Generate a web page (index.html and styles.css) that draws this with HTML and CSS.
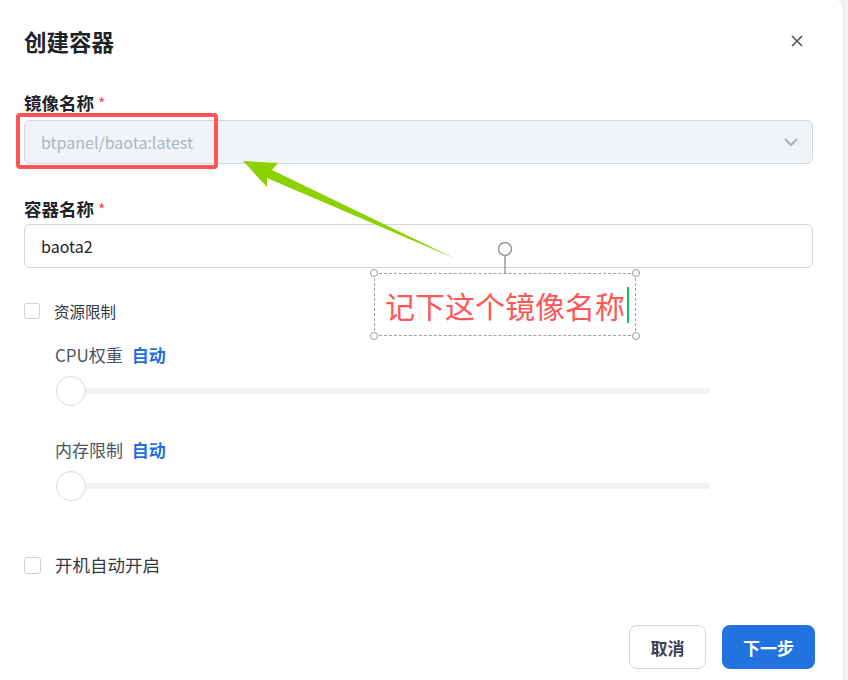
FILE: index.html
```html
<!DOCTYPE html>
<html lang="zh-CN">
<head>
    <meta charset="UTF-8">
    <title>创建容器</title>
    <link rel="stylesheet" href="styles.css">
</head>
<body>

    <div class="dialog">
        <!-- Header -->
        <div class="header">
            <h1>创建容器</h1>
            <button class="closebtn" aria-label="关闭">
                <svg width="12" height="12" viewBox="0 0 12 12"><path d="M1 1L11 11M11 1L1 11" stroke="#4b5563" stroke-width="1.6" fill="none"/></svg>
            </button>
        </div>

        <!-- Image name -->
        <label class="fieldlabel first">镜像名称 <span class="req">*</span></label>
        <div class="selectbox">
            <span class="placeholder">btpanel/baota:latest</span>
            <svg width="14" height="8" viewBox="0 0 14 8"><path d="M1 1L7 7L13 1" stroke="#a3b0c2" stroke-width="2" fill="none"/></svg>
        </div>

        <!-- Container name -->
        <label class="fieldlabel">容器名称 <span class="req">*</span></label>
        <div class="inputbox">baota2</div>

        <!-- Resource limits -->
        <div class="checkrow small">
            <span class="checkbox"></span>
            <span>资源限制</span>
        </div>

        <div class="limits">
            <div class="limitlabel">CPU权重 <span class="auto">自动</span></div>
            <div class="slider">
                <div class="track"></div>
                <div class="handle"></div>
            </div>

            <div class="limitlabel mem">内存限制 <span class="auto">自动</span></div>
            <div class="slider">
                <div class="track"></div>
                <div class="handle"></div>
            </div>
        </div>

        <div class="checkrow big">
            <span class="checkbox"></span>
            <span>开机自动开启</span>
        </div>

        <!-- Footer -->
        <div class="footer">
            <button class="btn cancel">取消</button>
            <button class="btn next">下一步</button>
        </div>

        <!-- Screenshot annotations -->
        <svg class="marks" width="848" height="680" viewBox="0 0 848 680">
            <rect x="18" y="115" width="198" height="52" rx="2" fill="none" stroke="#ff5454" stroke-width="4"/>
            <polygon points="243,161 278,163 272,170 456,259 267,178 267,187" fill="#8cd200"/>
            <line x1="505" y1="256" x2="505" y2="273" stroke="#9a9a9a" stroke-width="1.5"/>
            <circle cx="505" cy="249" r="6.5" fill="#fff" stroke="#9a9a9a" stroke-width="1.5"/>
        </svg>

        <div class="note">
            <span class="notetext">记下这个镜像名称</span><span class="caret"></span>
            <span class="dot tl"></span>
            <span class="dot tr"></span>
            <span class="dot bl"></span>
            <span class="dot br"></span>
        </div>
    </div>

</body>
</html>
```

FILE: styles.css
```css
body {
    margin: 0;
    padding: 0;
    background-color: #f2f3f5;
    font-family: "Noto Sans CJK SC", "Noto Sans", sans-serif;
    color: #1f2329;
}

/* Dialog */
.dialog {
    position: relative;
    width: 844px;
    height: 680px;
    box-sizing: border-box;
    padding: 0 30px 0 24px;
    background: white;
    border-right: 1px solid #e3e5ea;
    border-top-right-radius: 8px;
    overflow: hidden;
}

.header {
    display: flex;
    justify-content: space-between;
    align-items: center;
    padding-top: 25px;
    height: 32px;
}

.header h1 {
    margin: 0;
    font-size: 22.5px;
    line-height: 32px;
    font-weight: 700;
    color: #1f2329;
}

.closebtn {
    background: none;
    border: none;
    padding: 0;
    margin-right: 10px;
    width: 12px;
    height: 12px;
    display: flex;
    cursor: pointer;
}

/* Fields */
.fieldlabel {
    display: block;
    margin: 34px 0 6px;
    font-size: 17.5px;
    line-height: 22px;
    font-weight: 700;
}

.fieldlabel.first {
    margin-top: 35px;
}

.req {
    color: #f0455a;
    font-weight: 400;
    font-size: 16px;
}

.selectbox, .inputbox {
    height: 44px;
    box-sizing: border-box;
    border: 1px solid #cfd7e3;
    border-radius: 6px;
    padding: 0 14px 0 16px;
    display: flex;
    align-items: center;
    font-size: 16px;
}

.selectbox {
    background: #f0f3f8;
    justify-content: space-between;
}

.placeholder {
    color: #a9b6c8;
}

.inputbox {
    margin-top: -2px;
    color: #1f2329;
}

/* Checkboxes */
.checkrow {
    display: flex;
    align-items: center;
    gap: 14px;
    color: #333a45;
}

.checkrow.small {
    margin-top: 33px;
    font-size: 15.5px;
    line-height: 20px;
}

.checkrow.big {
    margin-top: 52px;
    font-size: 17.5px;
    line-height: 24px;
}

.checkbox {
    width: 16px;
    height: 16px;
    box-sizing: border-box;
    border: 1px solid #c9d2de;
    border-radius: 3px;
    flex: none;
}

.checkrow.big .checkbox {
    width: 17px;
    height: 17px;
}

/* Limits */
.limits {
    padding-left: 31px;
}

.limitlabel {
    margin-top: 22px;
    font-size: 17px;
    line-height: 24px;
    color: #4b5563;
}

.limitlabel.mem {
    margin-top: 32px;
}

.auto {
    margin-left: 5px;
    color: #1f6fe0;
    font-weight: 700;
}

.slider {
    position: relative;
    width: 655px;
    height: 30px;
    margin-top: 9px;
}

.track {
    position: absolute;
    left: 16px;
    right: 0;
    top: 12px;
    height: 6px;
    border-radius: 3px;
    background: #f1f2f4;
}

.handle {
    position: absolute;
    left: 1px;
    top: 0;
    width: 30px;
    height: 30px;
    box-sizing: border-box;
    border-radius: 50%;
    border: 1px solid #d3dae5;
    background: white;
}

/* Footer */
.footer {
    display: flex;
    justify-content: flex-end;
    gap: 16px;
    margin-top: 48px;
    margin-right: -2px;
}

.btn {
    height: 44px;
    border-radius: 8px;
    font-family: inherit;
    font-size: 17px;
    font-weight: 700;
    cursor: pointer;
}

.cancel {
    width: 77px;
    background: white;
    border: 1px solid #cfd7e3;
    color: #3a4354;
}

.next {
    width: 93px;
    background: #2272e0;
    border: none;
    color: white;
}

/* Annotations */
.marks {
    position: absolute;
    left: 0;
    top: 0;
    pointer-events: none;
}

.note {
    position: absolute;
    left: 374px;
    top: 273px;
    width: 262px;
    height: 63px;
    box-sizing: border-box;
    border: 1.5px dashed #a0a0a0;
    display: flex;
    align-items: center;
    padding-left: 10px;
}

.notetext {
    font-size: 30px;
    line-height: 36px;
    color: #ff5656;
}

.caret {
    width: 2px;
    height: 36px;
    background: #10c060;
    margin-left: 2px;
}

.dot {
    position: absolute;
    width: 8px;
    height: 8px;
    box-sizing: border-box;
    border: 1.5px solid #9a9a9a;
    border-radius: 50%;
    background: white;
}

.dot.tl { left: -5px; top: -5px; }
.dot.tr { right: -5px; top: -5px; }
.dot.bl { left: -5px; bottom: -5px; }
.dot.br { right: -5px; bottom: -5px; }
```
